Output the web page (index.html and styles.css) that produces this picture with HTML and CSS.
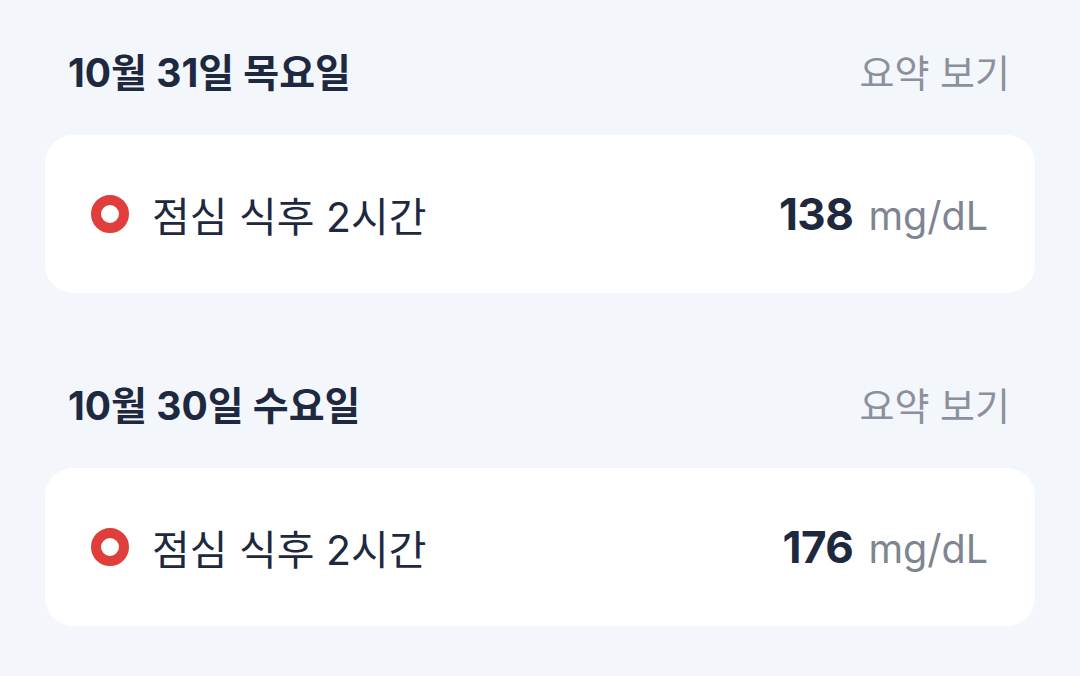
FILE: index.html
```html
<!DOCTYPE html>
<html lang="ko">
<head>
    <meta charset="UTF-8">
    <title>혈당 기록</title>
    <link rel="stylesheet" href="styles.css">
</head>
<body>

<div class="day-list">

    <div class="day">
        <div class="day-header">
            <span class="day-title">10월 31일 목요일</span>
            <a class="day-summary" href="javascript:void(0);">요약 보기</a>
        </div>
        <div class="record-card">
            <div class="record-label">
                <span class="record-dot"></span>
                <span class="record-name">점심 식후 2시간</span>
            </div>
            <div class="record-value">
                <span class="record-number">138</span>
                <span class="record-unit">mg/dL</span>
            </div>
        </div>
    </div>

    <div class="day">
        <div class="day-header">
            <span class="day-title">10월 30일 수요일</span>
            <a class="day-summary" href="javascript:void(0);">요약 보기</a>
        </div>
        <div class="record-card">
            <div class="record-label">
                <span class="record-dot"></span>
                <span class="record-name">점심 식후 2시간</span>
            </div>
            <div class="record-value">
                <span class="record-number">176</span>
                <span class="record-unit">mg/dL</span>
            </div>
        </div>
    </div>

</div>

</body>
</html>
```

FILE: styles.css
```css
* {
    padding: 0px;
    margin: 0px;
    box-sizing: border-box;
}

body {
    background: #f3f6fa;
    font-family: "Inter", "Noto Sans CJK KR", sans-serif;
    color: #1e2940;
}

a {
    text-decoration: none;
}

.day-list {
    padding: 46px 45px 0px 45px;
    display: flex;
    flex-direction: column;
    gap: 86px;
}

.day-header {
    height: 48px;
    padding: 0px 25px 0px 23px;
    display: flex;
    align-items: center;
    justify-content: space-between;
    margin-bottom: 41px;
}

.day-title {
    font-size: 39px;
    font-weight: 700;
}

.day-summary {
    font-size: 38px;
    color: #8b919c;
}

.record-card {
    height: 158px;
    background: #ffffff;
    border-radius: 28px;
    padding: 0px 47px 0px 46px;
    display: flex;
    align-items: center;
    justify-content: space-between;
}

.record-label {
    display: flex;
    align-items: center;
    gap: 23px;
}

.record-dot {
    width: 38px;
    height: 38px;
    border-radius: 50%;
    border: 10px solid #e03e3a;
    background: #ffffff;
}

.record-name {
    font-size: 41px;
}

.record-value {
    display: flex;
    align-items: baseline;
    gap: 15px;
}

.record-number {
    font-size: 44px;
    font-weight: 700;
    letter-spacing: -0.5px;
}

.record-unit {
    font-size: 39.5px;
    color: #7e8592;
}
```
